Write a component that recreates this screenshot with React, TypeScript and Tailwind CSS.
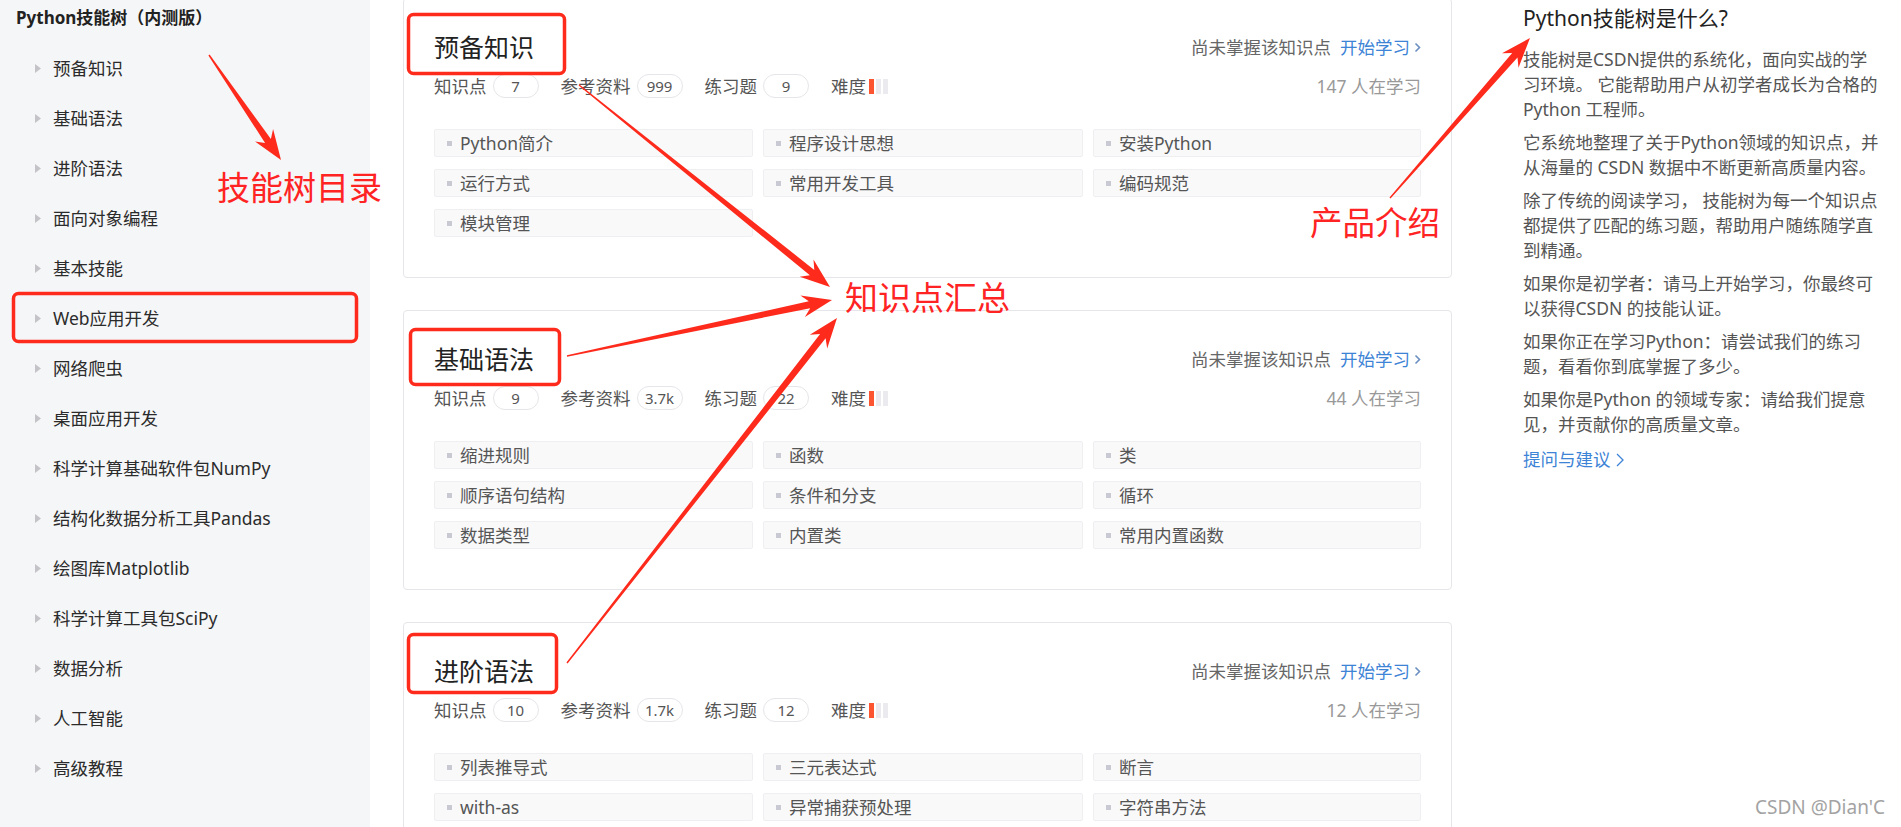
import React from "react";

type Chapter = {
  title: string;
  points: number;
  refs: string;
  exercises: number;
  learners: number;
  topics: string[];
};

const menu = [
  "预备知识",
  "基础语法",
  "进阶语法",
  "面向对象编程",
  "基本技能",
  "Web应用开发",
  "网络爬虫",
  "桌面应用开发",
  "科学计算基础软件包NumPy",
  "结构化数据分析工具Pandas",
  "绘图库Matplotlib",
  "科学计算工具包SciPy",
  "数据分析",
  "人工智能",
  "高级教程",
];

const chapters: Chapter[] = [
  {
    title: "预备知识",
    points: 7,
    refs: "999",
    exercises: 9,
    learners: 147,
    topics: ["Python简介", "程序设计思想", "安装Python", "运行方式", "常用开发工具", "编码规范", "模块管理"],
  },
  {
    title: "基础语法",
    points: 9,
    refs: "3.7k",
    exercises: 22,
    learners: 44,
    topics: ["缩进规则", "函数", "类", "顺序语句结构", "条件和分支", "循环", "数据类型", "内置类", "常用内置函数"],
  },
  {
    title: "进阶语法",
    points: 10,
    refs: "1.7k",
    exercises: 12,
    learners: 12,
    topics: [
      "列表推导式",
      "三元表达式",
      "断言",
      "with-as",
      "异常捕获预处理",
      "字符串方法",
      "lambda函数",
      "文件",
      "常用标准库",
      "正则表达式",
    ],
  },
];

// 红色标注箭头：尾部细，头部粗
function arrowPoints(x1: number, y1: number, x2: number, y2: number) {
  const dx = x2 - x1;
  const dy = y2 - y1;
  const len = Math.hypot(dx, dy);
  const ux = dx / len;
  const uy = dy / len;
  const nx = -uy;
  const ny = ux;
  const head = 30;
  const hw = 11;
  const barb = 7;
  const s0 = 0.7;
  const s1 = 3.5;
  const neck = [x2 - ux * head, y2 - uy * head];
  const inner = [x2 - ux * (head - barb), y2 - uy * (head - barb)];
  const pts = [
    [x1 + nx * s0, y1 + ny * s0],
    [inner[0] + nx * s1, inner[1] + ny * s1],
    [neck[0] + nx * hw, neck[1] + ny * hw],
    [x2, y2],
    [neck[0] - nx * hw, neck[1] - ny * hw],
    [inner[0] - nx * s1, inner[1] - ny * s1],
    [x1 - nx * s0, y1 - ny * s0],
  ];
  return pts.map((p) => `${p[0].toFixed(1)},${p[1].toFixed(1)}`).join(" ");
}

const arrows = [
  [209, 55, 281, 160],
  [579, 85, 830, 287],
  [567, 356, 832, 300],
  [567, 663, 837, 318],
  [1390, 198, 1530, 38],
];

const Chevron = ({ className }: { className?: string }) => (
  <svg className={className} width="7" height="11" viewBox="0 0 7 11" fill="none">
    <path d="M1.5 1.5 L5.5 5.5 L1.5 9.5" stroke="currentColor" strokeWidth="1.6" />
  </svg>
);

const Pill = ({ value }: { value: React.ReactNode }) => (
  <span className="ml-[6px] inline-flex h-[24px] w-[46px] items-center justify-center rounded-full border border-[#e6e6ea] text-[15px] text-[#555]">
    {value}
  </span>
);

const ChapterCard = ({ chapter }: { chapter: Chapter }) => (
  <section className="rounded-[4px] border border-[#e6e6ea] px-[30px] pt-[32px] pb-[40px]">
    <div className="flex h-[32px] items-center justify-between">
      <h2 className="text-[25px] leading-[32px] text-[#222]">{chapter.title}</h2>
      <div className="flex items-center text-[17.5px] text-[#666]">
        <span>尚未掌握该知识点</span>
        <span className="ml-[9px] text-[#3d83d6]">开始学习</span>
        <Chevron className="ml-[4px] text-[#6b8fc0]" />
      </div>
    </div>
    <div className="mt-[11px] flex h-[24px] items-center justify-between text-[17.5px] text-[#555]">
      <div className="flex items-center">
        <span>知识点</span>
        <Pill value={chapter.points} />
        <span className="ml-[22px]">参考资料</span>
        <Pill value={chapter.refs} />
        <span className="ml-[22px]">练习题</span>
        <Pill value={chapter.exercises} />
        <span className="ml-[22px]">难度</span>
        <span className="ml-[3px] flex gap-[2px]">
          <i className="block h-[15px] w-[5px] bg-[#fc5531]" />
          <i className="block h-[15px] w-[5px] bg-[#ebebef]" />
          <i className="block h-[15px] w-[5px] bg-[#ebebef]" />
        </span>
      </div>
      <span className="text-[#999]">{chapter.learners} 人在学习</span>
    </div>
    <div className="mt-[31px] grid grid-cols-[319px_320px_1fr] gap-x-[10px] gap-y-[12px]">
      {chapter.topics.map((t) => (
        <div
          key={t}
          className="flex h-[28px] items-center rounded-[2px] border border-[#efeff2] bg-[#f9f9fa] pl-[12px]"
        >
          <i className="block h-[5px] w-[5px] bg-[#c9c9d3]" />
          <span className="ml-[8px] text-[17.5px] text-[#555]">{t}</span>
        </div>
      ))}
    </div>
  </section>
);

export default function App() {
  return (
    <div className="relative flex h-[827px] w-[1901px] overflow-hidden bg-white font-['Noto_Sans','Noto_Sans_CJK_SC',sans-serif]">
      {/* 左侧目录 */}
      <aside className="h-full w-[370px] shrink-0 bg-[#f5f6f7] pl-[16px] pt-[6px]">
        <div className="text-[17px] font-bold leading-[24px] text-[#222]">Python技能树（内测版）</div>
        <ul className="mt-[13px]">
          {menu.map((m) => (
            <li key={m} className="flex h-[50px] items-center pl-[19px]">
              <svg width="6" height="9" viewBox="0 0 6 9">
                <path d="M0 0 L6 4.5 L0 9 Z" fill="#c4c4c8" />
              </svg>
              <span className="ml-[12px] text-[17.5px] text-[#2b2b2b]">{m}</span>
            </li>
          ))}
        </ul>
      </aside>

      {/* 知识点列表 */}
      <main className="-mt-[2px] ml-[33px] flex w-[1049px] shrink-0 flex-col gap-[32px]">
        {chapters.map((c) => (
          <ChapterCard key={c.title} chapter={c} />
        ))}
      </main>

      {/* 右侧介绍 */}
      <aside className="ml-[71px] w-[358px] shrink-0 pt-[4px]">
        <h3 className="text-[21px] leading-[28px] text-[#222]">Python技能树是什么?</h3>
        <div className="mt-[15px] space-y-[8px] text-[17.5px] leading-[25px] text-[#555]">
          <p>技能树是CSDN提供的系统化，面向实战的学习环境。 它能帮助用户从初学者成长为合格的Python 工程师。</p>
          <p>它系统地整理了关于Python领域的知识点，并从海量的 CSDN 数据中不断更新高质量内容。</p>
          <p>除了传统的阅读学习， 技能树为每一个知识点都提供了匹配的练习题，帮助用户随练随学直到精通。</p>
          <p>如果你是初学者：请马上开始学习，你最终可以获得CSDN 的技能认证。</p>
          <p>如果你正在学习Python：请尝试我们的练习题，看看你到底掌握了多少。</p>
          <p>如果你是Python 的领域专家：请给我们提意见，并贡献你的高质量文章。</p>
        </div>
        <div className="mt-[10px] flex items-center text-[17.5px] leading-[25px] text-[#3d83d6]">
          提问与建议
          <svg className="ml-[5px]" width="8" height="14" viewBox="0 0 8 14" fill="none">
            <path d="M1 1 L7 7 L1 13" stroke="currentColor" strokeWidth="1.3" />
          </svg>
        </div>
      </aside>

      {/* 红色标注 */}
      <svg className="pointer-events-none absolute inset-0" width="1901" height="827">
        <g fill="none" stroke="#fe2a1c" strokeWidth="3.5">
          <rect x="408.5" y="14.5" width="156" height="59" rx="5" />
          <rect x="410.5" y="329.5" width="149" height="55" rx="5" />
          <rect x="408.5" y="634.5" width="148" height="58" rx="5" />
          <rect x="13.5" y="293.5" width="343" height="48" rx="5" />
        </g>
        {arrows.map((a, i) => (
          <polygon key={i} points={arrowPoints(a[0], a[1], a[2], a[3])} fill="#fe2a1c" />
        ))}
      </svg>
      <div className="pointer-events-none absolute left-[217px] top-[171px] text-[33px] leading-none text-[#ff2323]">
        技能树目录
      </div>
      <div className="pointer-events-none absolute left-[845px] top-[281px] text-[33px] leading-none text-[#ff2323]">
        知识点汇总
      </div>
      <div className="pointer-events-none absolute left-[1310px] top-[207px] text-[32.5px] leading-none text-[#ff2323]">
        产品介绍
      </div>
      <div className="pointer-events-none absolute right-[16px] bottom-[6px] text-[19px] text-[#a3a3a3] [text-shadow:0_0_2px_#fff]">
        CSDN @Dian&apos;C
      </div>
    </div>
  );
}
